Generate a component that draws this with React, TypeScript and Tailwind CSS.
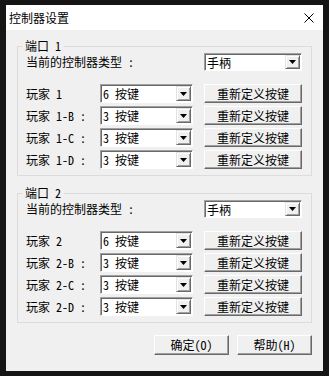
const font = "font-['Noto_Sans_Mono_CJK_SC','Noto_Sans_CJK_SC',sans-serif]"

const Arrow = () => (
  <div className="w-[15px] my-px mr-px flex items-center justify-center bg-[#f0f0f0] border border-t-[#e3e3e3] border-l-[#e3e3e3] border-r-[#696969] border-b-[#696969] shadow-[inset_1px_1px_0_#fff,inset_-1px_-1px_0_#a0a0a0]">
    <svg width="7" height="4" viewBox="0 0 7 4">
      <path d="M0 0h7L3.5 4z" fill="#000" />
    </svg>
  </div>
)

const Combo = ({ value, w, h }: { value: string; w: string; h: string }) => (
  <div className={`${w} ${h} flex bg-white border border-t-[#a0a0a0] border-l-[#a0a0a0] border-r-white border-b-white shadow-[inset_1px_1px_0_#696969]`}>
    <span className="flex-1 pl-[2px] pt-px leading-[15px] whitespace-pre">{value}</span>
    <Arrow />
  </div>
)

const Btn = ({ label, w, h }: { label: string; w: string; h: string }) => (
  <div className={`${w} ${h} flex items-center justify-center bg-[#f0f0f0] border border-t-white border-l-white border-r-[#696969] border-b-[#696969] shadow-[inset_-1px_-1px_0_#a0a0a0]`}>
    {label}
  </div>
)

const Group = ({ port }: { port: string }) => {
  const players = [`玩家 ${port}`, `玩家 ${port}-B :`, `玩家 ${port}-C :`, `玩家 ${port}-D :`]
  return (
    <fieldset className="border border-[#dcdcdc] pl-[8px] pr-[9px] pb-[6px]">
      <legend className="ml-[-4px] px-[3px] leading-[14px]">端口 {port}</legend>
      <div className="flex items-center justify-between h-[18px]">
        <span className="whitespace-pre">当前的控制器类型 :</span>
        <Combo value="手柄" w="w-[98px]" h="h-[18px]" />
      </div>
      <div className="mt-[13px] flex flex-col gap-[3px]">
        {players.map((p, i) => (
          <div key={p} className="flex items-center h-[19px]">
            <span className="w-[74px] whitespace-pre">{p}</span>
            <Combo value={i === 0 ? "6 按键" : "3 按键"} w="w-[93px]" h="h-[19px]" />
            <div className="ml-[11px]">
              <Btn label="重新定义按键" w="w-[98px]" h="h-[19px]" />
            </div>
          </div>
        ))}
      </div>
    </fieldset>
  )
}

export default function App() {
  return (
    <div className={`w-[329px] h-[376px] bg-[#151515] pl-[6px] pt-[5px] text-[12px] text-black ${font}`}>
      <div className="w-[317px] h-[366px] flex flex-col bg-[#f0f0f0]">
        <div className="h-[25px] bg-white flex items-center pl-[3px] pr-[9px]">
          <span className="flex-1 text-[12px] font-['Noto_Sans_CJK_SC',sans-serif]">控制器设置</span>
          <svg width="10" height="10" viewBox="0 0 10 10">
            <path d="M0.5 0.5L9.5 9.5M9.5 0.5L0.5 9.5" stroke="#000" strokeWidth="1" />
          </svg>
        </div>
        <div className="px-[11px] pt-[9px] flex flex-col">
          <Group port="1" />
          <div className="mt-[10px]">
            <Group port="2" />
          </div>
          <div className="mt-[12px] flex justify-end gap-[8px]">
            <Btn label="确定(O)" w="w-[75px]" h="h-[20px]" />
            <Btn label="帮助(H)" w="w-[75px]" h="h-[20px]" />
          </div>
        </div>
      </div>
    </div>
  )
}
